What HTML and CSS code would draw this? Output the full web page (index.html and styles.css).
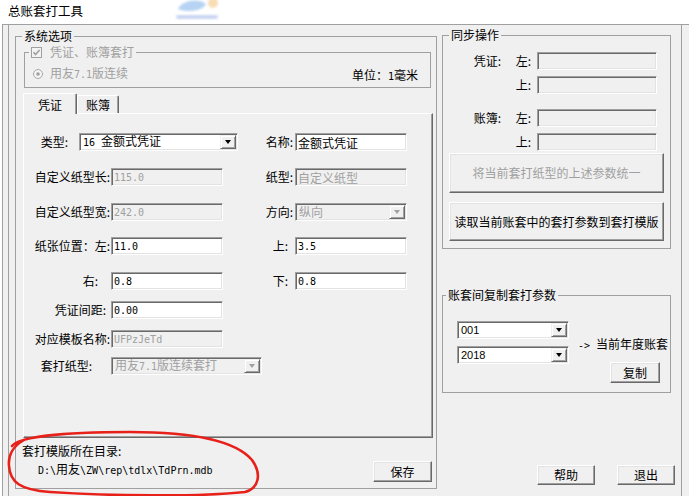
FILE: index.html
```html
<!DOCTYPE html>
<html lang="zh-CN">
<head>
<meta charset="utf-8">
<title>总账套打工具</title>
<link rel="stylesheet" href="styles.css">
</head>
<body>
<header class="titlebar">
  <span class="title">总账套打工具</span>
  <svg class="logo" width="48" height="22" viewBox="0 0 48 22" aria-hidden="true">
    <defs><filter id="bl" x="-30%" y="-30%" width="160%" height="160%"><feGaussianBlur stdDeviation="1.3"/></filter></defs>
    <g filter="url(#bl)" opacity="0.45">
      <path d="M5 9 C9 0, 26 -2, 33 4 C30 11, 14 13, 5 9 Z" fill="#5f9fe6"/>
      <circle cx="40" cy="3" r="5" fill="#f0b35a"/>
      <rect x="3" y="15" width="42" height="4" rx="2" fill="#8aa3e0"/>
    </g>
  </svg>
</header>
<div class="window">
  <div class="frame">
    <fieldset class="group sys">
      <legend>系统选项</legend>
      <fieldset class="group sub">
        <legend class="dim"><svg class="chk" width="11" height="11" viewBox="0 0 11 11"><rect x="0.5" y="0.5" width="10" height="10" fill="#f3f3f3" stroke="#a0a0a0"/><path d="M2.5 5.2 L4.5 7.6 L8.6 3" fill="none" stroke="#a0a0a0" stroke-width="1.6"/></svg>凭证、账簿套打</legend>
        <div class="sub-row">
          <span class="dim radio-item"><svg class="rad" width="10" height="10" viewBox="0 0 10 10"><circle cx="5" cy="5" r="4.5" fill="#f4f4f4" stroke="#a8a8a8"/><circle cx="5" cy="5" r="1.8" fill="#a0a0a0"/></svg>用友<span class="mono">7.1</span>版连续</span>
          <span class="unit">单位：<span class="mono">1</span>毫米</span>
        </div>
      </fieldset>
      <div class="tabs">
        <div class="tab active">凭证</div>
        <div class="tab second">账簿</div>
      </div>
      <div class="panel">
        <div class="row r1">
          <label class="lbl lbl-type">类型:</label>
          <div class="combo"><span class="ctext"><span class="mono">16 </span>金额式凭证</span><span class="drop"></span></div>
          <label class="lbl lbl-r">名称:</label>
          <input class="edit" type="text" value="金额式凭证">
        </div>
        <div class="row">
          <label class="lbl">自定义纸型长:</label>
          <input class="edit num off" type="text" value="115.0" disabled>
          <label class="lbl lbl-r">纸型:</label>
          <input class="edit off" type="text" value="自定义纸型" disabled>
        </div>
        <div class="row">
          <label class="lbl">自定义纸型宽:</label>
          <input class="edit num off" type="text" value="242.0" disabled>
          <label class="lbl lbl-r">方向:</label>
          <div class="combo off"><span class="ctext">纵向</span><span class="drop"></span></div>
        </div>
        <div class="row r4">
          <label class="lbl">纸张位置：左:</label>
          <input class="edit num" type="text" value="11.0">
          <label class="lbl lbl-ud">上:</label>
          <input class="edit num" type="text" value="3.5">
        </div>
        <div class="row">
          <label class="lbl lbl-rt">右:</label>
          <input class="edit num" type="text" value="0.8">
          <label class="lbl lbl-ud">下:</label>
          <input class="edit num" type="text" value="0.8">
        </div>
        <div class="row r6">
          <label class="lbl lbl-gap">凭证间距:</label>
          <input class="edit num" type="text" value="0.00">
        </div>
        <div class="row r7">
          <label class="lbl">对应模板名称:</label>
          <input class="edit num off" type="text" value="UFPzJeTd" disabled>
        </div>
        <div class="row r8">
          <label class="lbl lbl-kind">套打纸型:</label>
          <div class="combo off"><span class="ctext">用友<span class="mono">7.1</span>版连续套打</span><span class="drop"></span></div>
        </div>
      </div>
      <div class="sys-foot">
        <div class="dir">
          <div>套打模版所在目录:</div>
          <div class="path mono">D:\<span class="cjk">用友</span>\ZW\rep\tdlx\TdPrn.mdb</div>
        </div>
        <button class="btn save" type="button">保存</button>
      </div>
    </fieldset>

    <div class="side">
      <fieldset class="group sync">
        <legend>同步操作</legend>
        <div class="sync-row first">
          <span class="s-cat">凭证:</span><span class="s-side">左:</span>
          <input class="edit off s-edit" type="text" value="" disabled>
        </div>
        <div class="sync-row">
          <span class="s-cat"></span><span class="s-side">上:</span>
          <input class="edit off s-edit" type="text" value="" disabled>
        </div>
        <div class="sync-row gap">
          <span class="s-cat">账簿:</span><span class="s-side">左:</span>
          <input class="edit off s-edit" type="text" value="" disabled>
        </div>
        <div class="sync-row">
          <span class="s-cat"></span><span class="s-side">上:</span>
          <input class="edit off s-edit" type="text" value="" disabled>
        </div>
        <button class="btn bigbtn" type="button" disabled>将当前套打纸型的上述参数统一</button>
        <button class="btn bigbtn read" type="button">读取当前账套中的套打参数到套打模版</button>
      </fieldset>

      <fieldset class="group copy">
        <legend>账套间复制套打参数</legend>
        <div class="copy-body">
          <div class="combos">
            <div class="combo plain"><span class="ctext">001</span><span class="drop"></span></div>
            <div class="combo plain"><span class="ctext">2018</span><span class="drop"></span></div>
          </div>
          <div class="copy-right">
            <div class="arrow-text"><span class="mono">-&gt; </span>当前年度账套</div>
            <button class="btn copy-btn" type="button">复制</button>
          </div>
        </div>
      </fieldset>

      <div class="side-btns">
        <button class="btn" type="button">帮助</button>
        <button class="btn" type="button">退出</button>
      </div>
    </div>
  </div>
</div>
<svg class="mark" width="689" height="496" viewBox="0 0 689 496" aria-hidden="true">
  <path d="M12 446 C20 436, 70 432, 130 432 C190 432, 235 440, 252 460 C262 474, 259 488, 245 492 C200 497, 110 496, 50 492 C20 490, 10 482, 9 466 C8 455, 12 447, 24 440" fill="none" stroke="#e8201a" stroke-width="2.6" stroke-linecap="round"/>
</svg>
</body>
</html>
```

FILE: styles.css
```css
* { box-sizing: border-box; }
html, body { margin: 0; padding: 0; }
body {
  width: 689px;
  height: 496px;
  overflow: hidden;
  position: relative;
  background: #fff;
  color: #000;
  font-family: "Noto Sans CJK SC", "Noto Sans CJK JP", sans-serif;
  font-size: 12px;
  line-height: 12px;
}
.mono { font-family: "DejaVu Sans Mono", "Liberation Mono", monospace; font-size: 10px; }
.dim { color: #a0a0a0; }

/* title area */
.titlebar { height: 24px; display: flex; align-items: flex-start; }
.title { margin: 4px 0 0 8px; font-size: 12.5px; line-height: 13px; }
.logo { margin-left: 90px; }

/* window frame */
.window {
  height: 472px;
  margin-left: 2px;
  padding-left: 5px;
  border-top: 1px solid #a0a0a0;
  border-left: 1px solid #a0a0a0;
  background: #f0f0f0;
}
.frame {
  width: 674px;
  height: 100%;
  display: flex;
  align-items: flex-start;
  border-left: 1px solid #a0a0a0;
  border-right: 1px solid #a0a0a0;
}

/* group boxes */
.group { margin: 0; padding: 0; min-width: 0; border: 1px solid #a0a0a0; }
.group > legend { padding: 0 2px; margin-left: 6px; height: 12px; line-height: 12px; }

.sys { margin: 5px 0 0 6px; width: 422px; height: 459px; }
.sub { margin: 4px 0 0 8px; width: 407px; height: 42px; }
.sub > legend { margin-left: 4px; }
.chk { vertical-align: -1px; margin-right: 8px; }
.sub-row { display: flex; justify-content: space-between; margin-top: 9px; padding: 0 12px 0 8px; }
.rad { vertical-align: -1px; margin-right: 7px; }
.unit { margin-top: 2px; }

/* tabs */
.tabs { display: flex; align-items: flex-end; height: 20px; margin: 5px 0 0 7px; }
.tab {
  height: 18px;
  padding-top: 3px;
  text-align: center;
  border: 1px solid;
  border-bottom: 0;
  border-color: #fff #696969 #696969 #fff;
  border-radius: 2px 2px 0 0;
  box-shadow: inset -1px 0 #a0a0a0;
}
.tab.active {
  width: 54px;
  height: 21px;
  padding-top: 5px;
  margin-bottom: -1px;
  position: relative;
  z-index: 1;
  background: #f0f0f0;
}
.tab.second { width: 42px; }

.panel {
  width: 410px;
  height: 325px;
  margin-left: 7px;
  padding-top: 19px;
  border: 1px solid;
  border-color: #fff #696969 #696969 #fff;
  box-shadow: inset -1px -1px #a0a0a0;
}

/* form rows */
.row {
  display: grid;
  grid-template-columns: 87px 112px 72px 112px;
  align-items: center;
  height: 18px;
  margin-top: 17px;
}
.row.r1 { grid-template-columns: 55px 159px 57px 112px; margin-top: 0; }
.row.r4 { margin-top: 16px; }
.row.r6, .row.r7 { margin-top: 11px; }
.row.r8 { margin-top: 9px; grid-template-columns: 87px 151px; }

.lbl { text-align: right; padding-right: 1px; white-space: nowrap; }
.lbl-type { padding-right: 11px; }
.lbl-rt { padding-right: 13px; }
.lbl-gap { padding-right: 5px; }
.lbl-kind { padding-right: 19px; }
.lbl-r { padding-right: 2px; }
.lbl-ud { padding-right: 7px; }

.edit {
  width: 100%;
  height: 18px;
  margin: 0;
  padding: 0 0 0 2px;
  border: 1px solid;
  border-color: #a0a0a0 #fff #fff #a0a0a0;
  box-shadow: inset 1px 1px #696969, inset -1px -1px #e3e3e3;
  background: #fff;
  color: #000;
  font-family: "Noto Sans CJK SC", sans-serif;
  font-size: 12px;
  outline: none;
}
.edit.num { font-family: "DejaVu Sans Mono", "Liberation Mono", monospace; font-size: 10px; }
.edit.off { background: #f0f0f0; color: #a0a0a0; }

.combo {
  display: flex;
  align-items: center;
  height: 18px;
  padding: 1px 1px 1px 3px;
  border: 1px solid;
  border-color: #a0a0a0 #fff #fff #a0a0a0;
  box-shadow: inset 1px 1px #696969, inset -1px -1px #e3e3e3;
  background: #fff;
}
.combo.off { background: #f0f0f0; color: #a0a0a0; }
.combo.plain { font-family: "Liberation Sans", Arial, sans-serif; font-size: 11px; }
.ctext { white-space: nowrap; line-height: 14px; }
.drop {
  margin-left: auto;
  flex: none;
  width: 16px;
  height: 100%;
  display: flex;
  align-items: center;
  justify-content: center;
  background: #f0f0f0;
  border: 1px solid;
  border-color: #f0f0f0 #696969 #696969 #f0f0f0;
  box-shadow: inset 1px 1px #fff, inset -1px -1px #a0a0a0;
}
.drop::after {
  content: "";
  border-left: 3.5px solid transparent;
  border-right: 3.5px solid transparent;
  border-top: 4px solid #000;
}
.combo.off .drop::after { border-top-color: #a0a0a0; }

/* buttons */
.btn {
  font-family: "Noto Sans CJK SC", sans-serif;
  font-size: 12px;
  line-height: 12px;
  color: #000;
  background: #f0f0f0;
  padding: 0;
  border: 1px solid;
  border-color: #fff #696969 #696969 #fff;
  box-shadow: inset -1px -1px #a0a0a0, inset 1px 1px #e3e3e3;
}
.btn:disabled { color: #a0a0a0; }

/* footer of system group */
.sys-foot { display: flex; align-items: flex-start; }
.dir { margin: 7px 0 0 6px; }
.path { margin-top: 6px; padding-left: 16px; line-height: 12px; }
.path .cjk { font-family: "Noto Sans CJK SC", sans-serif; font-size: 12px; }
.save { margin: 23px 4px 0 auto; width: 59px; height: 21px; }

/* right column */
.side { margin: 4px 0 0 5px; width: 229px; }
.sync { height: 220px; }
.sync-row { display: flex; align-items: center; height: 18px; margin-top: 6px; }
.sync-row.first { margin-top: 11px; }
.sync-row.gap { margin-top: 15px; }
.s-cat { width: 60px; text-align: right; padding-right: 2px; }
.s-side { width: 32px; text-align: right; padding-right: 4px; }
.edit.s-edit { width: 120px; margin-left: 2px; }
.bigbtn { display: block; margin: 2px 0 0 6px; width: 215px; height: 40px; }
.bigbtn.read { margin-top: 9px; height: 39px; }

.copy { margin-top: 40px; height: 104px; }
.copy > legend { margin-left: 3px; }
.copy-body { display: flex; margin-top: 20px; padding-left: 14px; }
.combos { display: flex; flex-direction: column; gap: 7px; width: 112px; }
.copy-right { margin-left: 9px; padding-top: 16px; }
.arrow-text { line-height: 14px; white-space: nowrap; }
.copy-btn { display: block; margin: 9px 0 0 32px; width: 50px; height: 21px; }

.side-btns { display: flex; gap: 22px; margin-top: 72px; padding-left: 95px; }
.side-btns .btn { flex: none; width: 58px; height: 20px; }

/* hand-drawn annotation */
.mark { position: absolute; left: 0; top: 0; pointer-events: none; }
```
